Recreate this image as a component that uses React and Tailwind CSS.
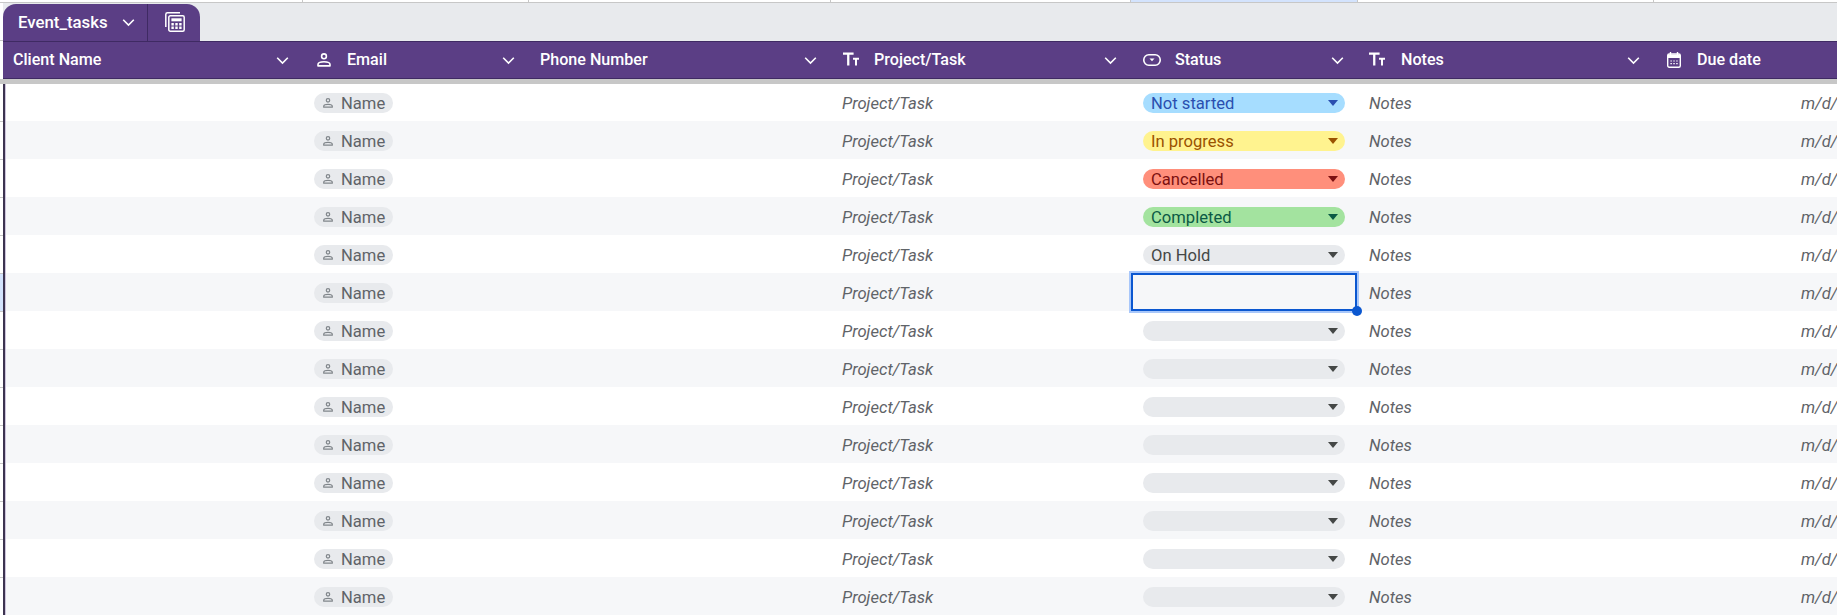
const TextIcon = () => (
  <svg width="16" height="14" viewBox="0 0 16 14" className="block -mt-[2px]" fill="currentColor">
    <path d="M0 .6h10.6v2.2H6.4v10.7H4.1V2.8H0z" />
    <path d="M10 5.8h6v1.9h-2v5.8h-2V7.7h-2z" />
  </svg>
);
const PersonIcon = ({ w = 14, h = 14, sw = 1.6, cls = "-mt-[1px]" }) => (
  <svg width={w} height={h} viewBox="0 0 14 14" fill="none" stroke="currentColor" strokeWidth={sw} className={`block shrink-0 ${cls}`}>
    <circle cx="7" cy="3.3" r="2.4" />
    <path d="M1 12.9v-1.4C1 9.9 3.6 8.8 7 8.8s6 1.1 6 2.7v1.4z" strokeLinejoin="round" />
  </svg>
);
const StatusIcon = () => (
  <svg width="18" height="12" viewBox="0 0 18 12" fill="none" className="block">
    <rect x="0.8" y="0.8" width="16.4" height="10.4" rx="5" stroke="currentColor" strokeWidth="1.6" />
    <path d="M6.5 4.6h5L9 7.2z" fill="currentColor" />
  </svg>
);
const CalIcon = () => (
  <svg width="14" height="16" viewBox="0 0 14 16" fill="none" className="block -mt-[1px]">
    <rect x="0.7" y="2" width="12.6" height="13.3" rx="1.5" stroke="currentColor" strokeWidth="1.4" />
    <path d="M1 2.5h12v3.5H1z" fill="currentColor" />
    <path d="M3.5 0v3M10.5 0v3" stroke="currentColor" strokeWidth="1.4" />
    <path d="M3.4 8.4h1.5v1.2H3.4zM6.3 8.4h1.5v1.2H6.3zM9.2 8.4h1.5v1.2H9.2zM3.4 11h1.5v1.2H3.4zM6.3 11h1.5v1.2H6.3zM9.2 11h1.5v1.2H9.2z" fill="currentColor" />
  </svg>
);
const Chevron = () => (
  <svg width="13" height="9" viewBox="0 0 13 9" fill="none" stroke="currentColor" strokeWidth="1.6" className="shrink-0">
    <path d="M1.2 1.8l5.3 5.3 5.3-5.3" />
  </svg>
);
const TableIcon = () => (
  <svg width="20" height="20" viewBox="0 0 20 20" fill="none" stroke="currentColor" className="block">
    <path d="M.8 15V2.5C.8 1.5 1.5.8 2.5.8H15" strokeWidth="1.5" />
    <rect x="3.8" y="3.8" width="15.4" height="15.4" rx="1.5" strokeWidth="1.5" />
    <rect x="6.4" y="6.3" width="10.2" height="3" fill="currentColor" stroke="none" />
    <path d="M6.4 11h2.4v2.4H6.4zM10.3 11h2.4v2.4h-2.4zM14.2 11h2.4v2.4h-2.4zM6.4 14.6h2.4V17H6.4zM10.3 14.6h2.4V17h-2.4zM14.2 14.6h2.4V17h-2.4z" fill="currentColor" stroke="none" />
  </svg>
);

const cols = [
  { w: "w-[300px]", pad: "pl-[10px]", box: "", label: "Client Name", Icon: null },
  { w: "w-[226px]", pad: "pl-[14px]", box: "w-[30px]", label: "Email", Icon: PersonIcon },
  { w: "w-[302px]", pad: "pl-[11px]", box: "", label: "Phone Number", Icon: null },
  { w: "w-[300px]", pad: "pl-[12px]", box: "w-[31px]", label: "Project/Task", Icon: TextIcon },
  { w: "w-[227px]", pad: "pl-[12px]", box: "w-[32px]", label: "Status", Icon: StatusIcon },
  { w: "w-[296px]", pad: "pl-[11px]", box: "w-[32px]", label: "Notes", Icon: TextIcon },
  { w: "w-[183px]", pad: "pl-[13px]", box: "w-[30px]", label: "Due date", Icon: CalIcon },
];

const statuses = [
  { t: "Not started", bg: "bg-[#a6ddff]", c: "text-[#2a4fb0]", car: "border-t-[#2a4fb0]" },
  { t: "In progress", bg: "bg-[#fff38f]", c: "text-[#9a5200]", car: "border-t-[#9a5200]" },
  { t: "Cancelled", bg: "bg-[#ff8f7b]", c: "text-[#7c1010]", car: "border-t-[#7c1010]" },
  { t: "Completed", bg: "bg-[#a3e39f]", c: "text-[#0b5a45]", car: "border-t-[#0b5a45]" },
  { t: "On Hold", bg: "bg-[#e8eaed]", c: "text-[#444746]", car: "border-t-[#444746]" },
  null,
];
const blank = { t: "", bg: "bg-[#e8eaed]", c: "text-[#444746]", car: "border-t-[#444746]" };

const StatusPill = ({ s }) => (
  <div className={`h-5 w-[202px] ml-3 rounded-full flex items-center justify-between pl-2 pr-[8px] text-[16.6px] ${s.bg} ${s.c}`}>
    <span className="pt-[2px]">{s.t}</span>
    <span className={`-mr-[1px] w-0 h-0 border-x-[5px] border-x-transparent border-t-[6px] ${s.car}`} />
  </div>
);

const italic = "italic text-[#5f6368] text-[16.6px] pt-[2px]";

const Row = ({ i }) => {
  const st = i < statuses.length ? statuses[i] : blank;
  return (
    <div className={`flex items-center h-[38px] pt-[2px] ${i % 2 ? "bg-[#f6f7f9]" : "bg-white"}`}>
      <div className="w-[297px] shrink-0" />
      <div className="w-[226px] shrink-0 pl-[11px]">
        <div className="h-5 w-[79px] rounded-full bg-[#e8eaed] flex items-center pl-[9px] gap-[8px] text-[16.6px] text-[#5f6368]">
          <span className="text-[#80868b]"><PersonIcon w={10} h={10} sw={1.7} cls="" /></span>
          <span className="pt-[2px]">Name</span>
        </div>
      </div>
      <div className="w-[302px] shrink-0" />
      <div className={`w-[300px] shrink-0 pl-[11px] ${italic}`}>Project/Task</div>
      <div className="w-[227px] shrink-0 relative self-stretch flex items-center">
        {st ? (
          <StatusPill s={st} />
        ) : (
          <>
            <div className="absolute -top-[2px] bottom-0 left-0 right-[1px] border-2 border-[#0b57d0] outline-2 outline-solid outline-[#a8c7fa]" />
            <div className="absolute -right-[4px] -bottom-[5px] w-[10px] h-[10px] rounded-full bg-[#0b57d0]" />
          </>
        )}
      </div>
      <div className={`w-[296px] shrink-0 pl-[11px] ${italic}`}>Notes</div>
      <div className={`w-[183px] shrink-0 whitespace-nowrap pl-[147px] ${italic}`}>m/d/</div>
    </div>
  );
};

const gridCols = [
  { w: "w-[303px]" }, { w: "w-[226px]" }, { w: "w-[302px]" }, { w: "w-[300px]" },
  { w: "w-[227px]", bg: "bg-[#d3e3fd]" }, { w: "w-[296px]" }, { w: "w-[183px]", last: true },
];

export default function App() {
  return (
    <div className="w-[1837px] h-[615px] overflow-hidden bg-white font-['Roboto',sans-serif]">
      <div className="flex h-[3px] border-b border-[#c7c7c7]">
        {gridCols.map((c, i) => (
          <div key={i} className={`${c.w} shrink-0 ${c.last ? "" : "border-r border-[#c7c7c7]"} ${c.bg || ""}`} />
        ))}
      </div>
      <div className="flex">
        <div className="w-[3px] shrink-0 flex flex-col">
          <div className="h-[38px] border-b border-[#c7c7c7]" />
          <div className="h-[38px]" />
          <div className="h-[5px] bg-[#c7c7c7]" />
          {Array.from({ length: 14 }, (_, i) => (
            <div key={i} className={`h-[38px] shrink-0 border-b border-[#c7c7c7] ${i === 5 ? "bg-[#d3e3fd]" : ""}`} />
          ))}
        </div>
        <div className="flex-1 min-w-0">
          <div className="h-[38px] bg-[#e8eaed] flex items-end">
            <div className="h-[37px] w-[197px] bg-[#5b3e85] rounded-t-[13px] flex text-white">
              <div className="w-[145px] flex items-center pl-[15px] gap-[14px] border-r border-[#3f2a63] text-[16.8px] font-medium">
                <span>Event_tasks</span>
                <Chevron />
              </div>
              <div className="flex-1 flex items-start pt-[8px] pl-[17px]">
                <TableIcon />
              </div>
            </div>
          </div>
          <div className="h-[38px] bg-[#5b3e85] border-y border-[#3f2a63] flex text-white text-[16.1px] font-medium">
            {cols.map((c, i) => {
              const I = c.Icon;
              return (
                <div key={i} className={`${c.w} shrink-0 flex items-center ${c.pad} pr-[14px]`}>
                  {I && <span className={`${c.box} shrink-0`}><I /></span>}
                  <span className="flex-1 whitespace-nowrap">{c.label}</span>
                  {i < 6 && <Chevron />}
                </div>
              );
            })}
          </div>
          <div className="relative h-[5px] -mb-[1px] bg-[#c7c7c7]" />
          <div className="border-l-2 border-l-[#3c3350]">
            <div className="border-l border-l-[#cdc4dc]">
              {Array.from({ length: 14 }, (_, i) => <Row key={i} i={i} />)}
            </div>
          </div>
        </div>
      </div>
    </div>
  );
}
